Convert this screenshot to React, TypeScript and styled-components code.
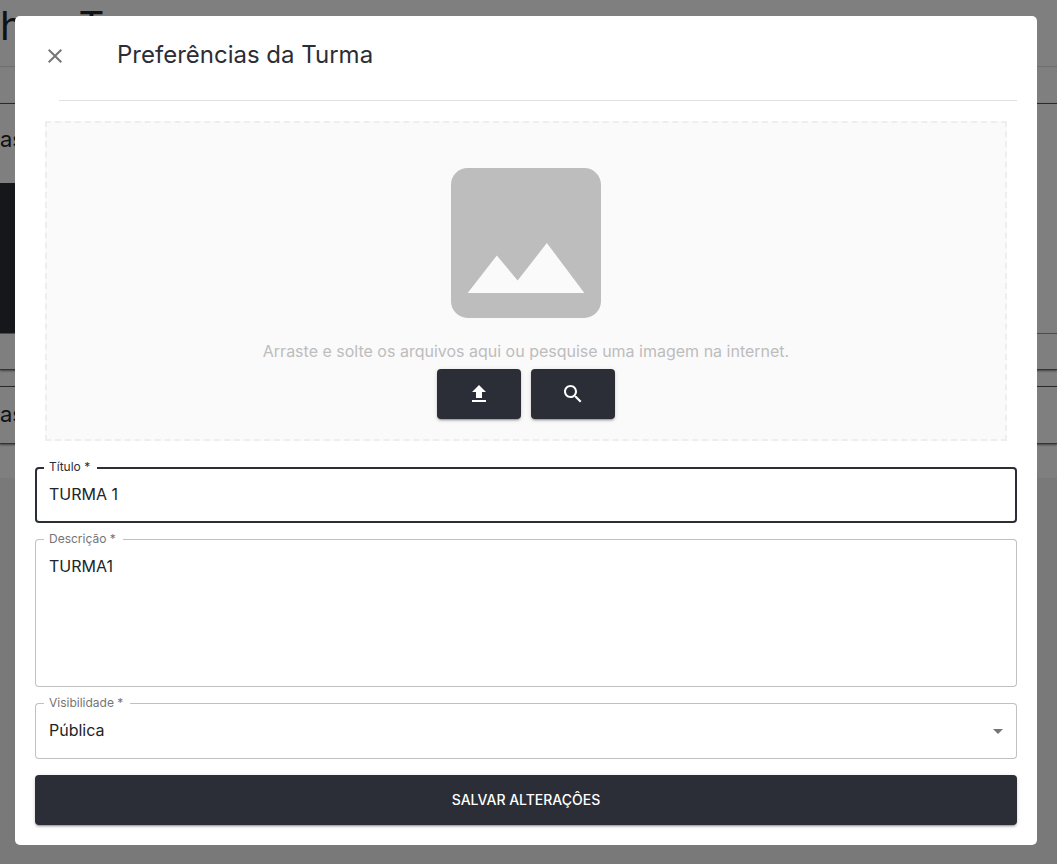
import React from 'react';
import styled, { createGlobalStyle } from 'styled-components';

const ink = '#2b2e36';

const GlobalStyle = createGlobalStyle`
  *, *::before, *::after { box-sizing: border-box; }
  body {
    margin: 0;
    background: #f2f2f2;
    color: #212529;
    font-family: Inter, Roboto, sans-serif;
    font-size: 16px;
    line-height: 24px;
  }
  button, input, textarea, select { font: inherit; color: inherit; }
`;

const Page = styled.main`
  height: 100vh;
  overflow: hidden;
`;

const PageContent = styled.div`
  background: #fff;
  padding-bottom: 18px;
`;

const PageHeader = styled.header`
  height: 67px;
  border-bottom: 1px solid #dedede;
  margin-bottom: 36px;
`;

const PageTitle = styled.h1`
  margin: 0;
  font-size: 40px;
  font-weight: 400;
  line-height: 52px;
`;

const ClassCard = styled.section`
  border-top: 1px solid #555;
  border-bottom: 1px solid #666;
  box-shadow: 0 1px 2px rgba(0, 0, 0, 0.5);
  margin-bottom: 16px;
`;

const ClassName = styled.h2<{ $tall?: boolean }>`
  margin: 0;
  height: ${(p) => (p.$tall ? 79 : 56)}px;
  font-size: 22px;
  font-weight: 400;
  line-height: ${(p) => (p.$tall ? 70 : 54)}px;
`;

const ClassBanner = styled.div`
  height: 151px;
  border-bottom: 1px solid #999;
  background: linear-gradient(${ink}, ${ink}) left / 50% 100% no-repeat;
`;

const ClassFooter = styled.div`
  height: 35px;
`;

const Overlay = styled.div`
  position: fixed;
  inset: 0;
  overflow: auto;
  padding: 16px 20px 19px 15px;
  background: rgba(0, 0, 0, 0.5);
`;

const Dialog = styled.div`
  background: #fff;
  border-radius: 5px;
  padding: 20px;
`;

const DialogHeader = styled.header`
  display: flex;
  align-items: center;
  gap: 42px;
  height: 40px;
`;

const CloseButton = styled.button`
  display: flex;
  padding: 8px;
  border: 0;
  background: none;
  color: #757575;
  cursor: pointer;
`;

const DialogTitle = styled.h2`
  margin: 0;
  color: ${ink};
  font-size: 24px;
  font-weight: 400;
  line-height: 32px;
  padding-bottom: 2px;
`;

const Divider = styled.hr`
  margin: 24px 0 20px 24px;
  border: 0;
  border-top: 1px solid #e0e0e0;
`;

const DropZone = styled.section`
  display: flex;
  flex-direction: column;
  align-items: center;
  margin: 0 10px 26px;
  padding: 20px;
  border: 2px dashed #eee;
  background: #fafafa;
  color: #bdbdbd;
`;

const DropText = styled.p`
  margin: 0 0 10px;
  line-height: 16px;
  text-align: center;
`;

const DropActions = styled.div`
  display: flex;
  gap: 10px;
`;

const Button = styled.button<{ $wide?: boolean }>`
  display: flex;
  align-items: center;
  justify-content: center;
  width: ${(p) => (p.$wide ? '100%' : '84px')};
  height: 50px;
  border: 0;
  border-radius: 4px;
  background: ${ink};
  box-shadow: 0 3px 1px -2px rgba(0, 0, 0, 0.2), 0 2px 2px rgba(0, 0, 0, 0.14), 0 1px 5px rgba(0, 0, 0, 0.12);
  color: #fff;
  font-size: 14px;
  font-weight: 500;
  text-transform: uppercase;
  cursor: pointer;
`;

const Form = styled.form`
  display: flex;
  flex-direction: column;
  gap: 16px;
`;

const Field = styled.div<{ $active?: boolean }>`
  position: relative;
  display: flex;
  border-radius: 4px;
  box-shadow: inset 0 0 0 ${(p) => (p.$active ? `2px ${ink}` : '1px #c0c0c0')};
  color: #212529;
`;

const Label = styled.label<{ $active?: boolean }>`
  position: absolute;
  top: -8px;
  left: 9px;
  padding: 0 7px 0 5px;
  background: #fff;
  color: ${(p) => (p.$active ? ink : '#757575')};
  font-size: 12px;
  line-height: 16px;
`;

const TextInput = styled.input`
  width: 100%;
  height: 56px;
  padding: 0 14px 2px;
  border: 0;
  outline: 0;
  background: none;
`;

const TextArea = styled.textarea`
  width: 100%;
  height: 148px;
  padding: 15px 14px;
  border: 0;
  outline: 0;
  background: none;
  resize: none;
`;

const Select = styled.select`
  width: 100%;
  height: 56px;
  padding: 0 32px 2px 14px;
  border: 0;
  outline: 0;
  background: none;
  appearance: none;
`;

const SelectArrow = styled.svg`
  position: absolute;
  top: 16px;
  right: 7px;
  color: #757575;
  pointer-events: none;
`;

const Icon = ({ path, size = 24 }: { path: string; size?: number }) => (
  <svg width={size} height={size} viewBox="0 0 24 24" fill="currentColor" aria-hidden="true">
    <path d={path} />
  </svg>
);

const icons = {
  close:
    'M19 6.41L17.59 5 12 10.59 6.41 5 5 6.41 10.59 12 5 17.59 6.41 19 12 13.41 17.59 19 19 17.59 13.41 12z',
  image:
    'M21 19V5c0-1.1-.9-2-2-2H5c-1.1 0-2 .9-2 2v14c0 1.1.9 2 2 2h14c1.1 0 2-.9 2-2zM8.5 13.5l2.5 3.01L14.5 12l4.5 6H5l3.5-4.5z',
  upload: 'M9 16h6v-6h4l-7-7-7 7h4zm-4 2h14v2H5z',
  search:
    'M15.5 14h-.79l-.28-.27C15.41 12.59 16 11.11 16 9.5 16 5.91 13.09 3 9.5 3S3 5.91 3 9.5 5.91 16 9.5 16c1.61 0 3.09-.59 4.23-1.57l.27.28v.79l5 4.99L20.49 19l-4.99-5zm-6 0C7.01 14 5 11.99 5 9.5S7.01 5 9.5 5 14 7.01 14 9.5 11.99 14 9.5 14z',
};

export default function App() {
  return (
    <>
      <GlobalStyle />
      <Page aria-hidden="true">
        <PageContent>
          <PageHeader>
            <PageTitle>has T</PageTitle>
          </PageHeader>
          <ClassCard>
            <ClassName $tall>as</ClassName>
            <ClassBanner />
            <ClassFooter />
          </ClassCard>
          <ClassCard>
            <ClassName>as</ClassName>
          </ClassCard>
        </PageContent>
      </Page>
      <Overlay>
        <Dialog role="dialog" aria-modal="true" aria-labelledby="dialog-title">
          <DialogHeader>
            <CloseButton type="button" aria-label="Fechar">
              <Icon path={icons.close} />
            </CloseButton>
            <DialogTitle id="dialog-title">Preferências da Turma</DialogTitle>
          </DialogHeader>
          <Divider />
          <DropZone>
            <Icon path={icons.image} size={200} />
            <DropText>Arraste e solte os arquivos aqui ou pesquise uma imagem na internet.</DropText>
            <DropActions>
              <Button type="button" aria-label="Enviar imagem">
                <Icon path={icons.upload} />
              </Button>
              <Button type="button" aria-label="Pesquisar imagem">
                <Icon path={icons.search} />
              </Button>
            </DropActions>
          </DropZone>
          <Form onSubmit={(e) => e.preventDefault()}>
            <Field $active>
              <TextInput id="titulo" defaultValue="TURMA 1" required />
              <Label htmlFor="titulo" $active>Título *</Label>
            </Field>
            <Field>
              <TextArea id="descricao" defaultValue="TURMA1" required />
              <Label htmlFor="descricao">Descrição *</Label>
            </Field>
            <Field>
              <Select id="visibilidade" defaultValue="publica" required>
                <option value="publica">Pública</option>
                <option value="privada">Privada</option>
              </Select>
              <Label htmlFor="visibilidade">Visibilidade *</Label>
              <SelectArrow width="24" height="24" viewBox="0 0 24 24" fill="currentColor" aria-hidden="true">
                <path d="M7 10l5 5 5-5z" />
              </SelectArrow>
            </Field>
            <Button type="submit" $wide>Salvar alteraçôes</Button>
          </Form>
        </Dialog>
      </Overlay>
    </>
  );
}
